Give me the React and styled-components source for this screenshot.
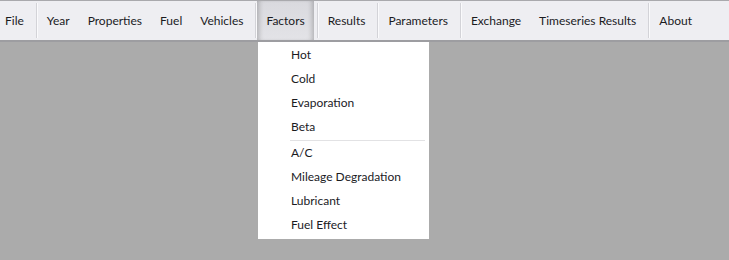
import React from "react";
import styled, { createGlobalStyle } from "styled-components";

const Global = createGlobalStyle`
  html, body {
    margin: 0;
    padding: 0;
    background: #ababab;
    font-family: Lato, "Noto Sans", sans-serif;
  }
`;

const Window = styled.div`
  position: relative;
  width: 729px;
  height: 260px;
  background: #ababab;
`;

const MenuBar = styled.nav`
  display: flex;
  align-items: stretch;
  height: 39px;
  background: #eeeef2;
  border-top: 1px solid #a9a9ad;
  border-bottom: 2px solid #9d9da1;
`;

const MenuItem = styled.div`
  display: flex;
  align-items: center;
  padding: 0 9px;
  font-size: 12px;
  color: #1b1b1f;
  white-space: nowrap;
  cursor: default;
  background: ${(p) => (p.$open ? "linear-gradient(#d9d9de, #e3e3e7)" : "transparent")};
  box-shadow: ${(p) =>
    p.$open
      ? "inset 5px 0 5px -3px rgba(0,0,0,0.22), inset -5px 0 5px -3px rgba(0,0,0,0.22)"
      : "none"};

  &:first-child {
    padding: 0 9px 0 5px;
  }
`;

const Divider = styled.div`
  width: 1px;
  margin: 2px 1px 2px 3px;
  background: #d3d3d8;
  box-shadow: 1px 0 0 #fafafc;
`;

const Dropdown = styled.div`
  position: absolute;
  left: 258px;
  top: 42px;
  width: 171px;
  padding: 1px 0 2px;
  background: #ffffff;
  box-sizing: border-box;
`;

const DropItem = styled.div`
  height: 24px;
  line-height: 24px;
  padding-left: 33px;
  font-size: 12px;
  color: #1b1b1f;
  white-space: nowrap;
`;

const DropSeparator = styled.div`
  height: 1px;
  margin: 1px 4px 0 32px;
  background: #e2e2e4;
`;

const menus = [
  { label: "File", sep: true },
  { label: "Year" },
  { label: "Properties" },
  { label: "Fuel" },
  { label: "Vehicles", sep: true },
  { label: "Factors", open: true, sep: true },
  { label: "Results", sep: true },
  { label: "Parameters", sep: true },
  { label: "Exchange" },
  { label: "Timeseries Results", sep: true },
  { label: "About" },
];

const factorGroups = [
  ["Hot", "Cold", "Evaporation", "Beta"],
  ["A/C", "Mileage Degradation", "Lubricant", "Fuel Effect"],
];

export default function App() {
  return (
    <>
      <Global />
      <Window>
        <MenuBar>
          {menus.map((m) => (
            <React.Fragment key={m.label}>
              <MenuItem $open={m.open}>{m.label}</MenuItem>
              {m.sep && <Divider />}
            </React.Fragment>
          ))}
        </MenuBar>
        <Dropdown>
          {factorGroups.map((group, i) => (
            <React.Fragment key={i}>
              {i > 0 && <DropSeparator />}
              {group.map((item) => (
                <DropItem key={item}>{item}</DropItem>
              ))}
            </React.Fragment>
          ))}
        </Dropdown>
      </Window>
    </>
  );
}
